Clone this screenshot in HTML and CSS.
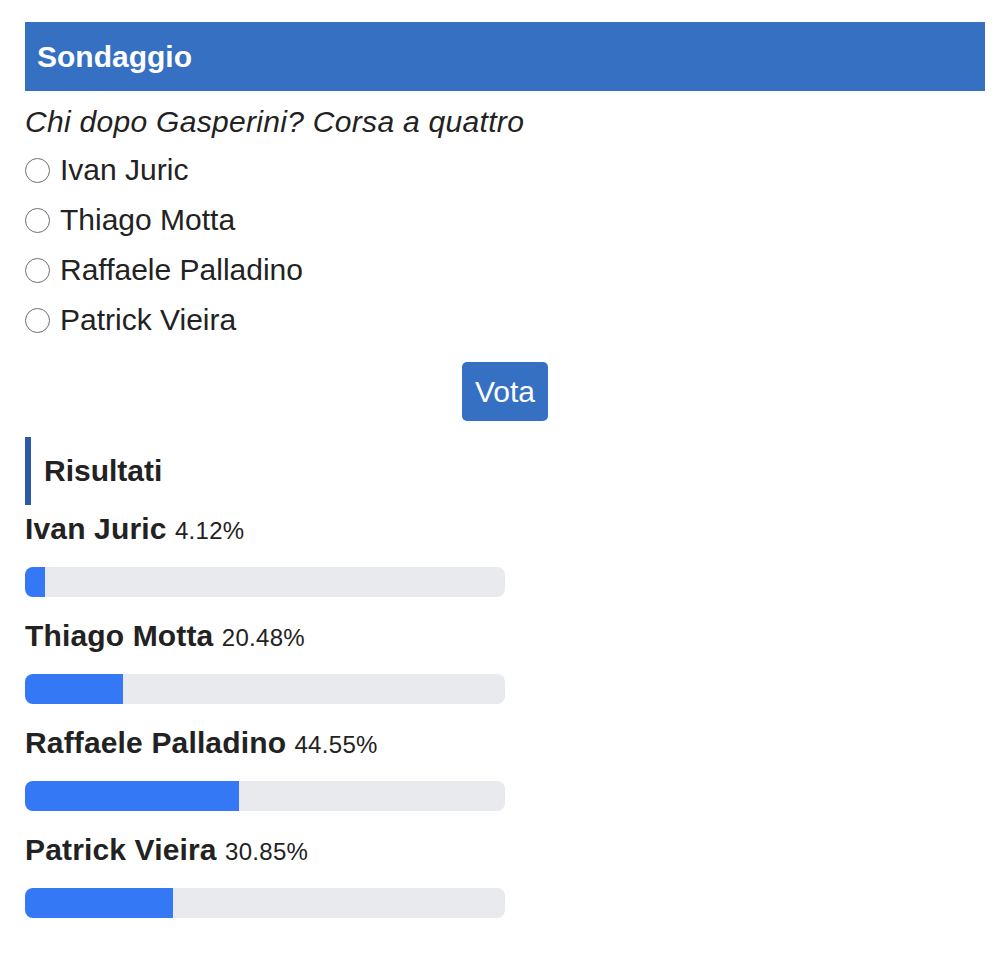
FILE: index.html
```html
<!DOCTYPE html>
<html lang="it">
<head>
<meta charset="utf-8">
<title>Sondaggio</title>
<link rel="stylesheet" href="styles.css">
</head>
<body>
<div class="poll">
  <div class="poll-header">Sondaggio</div>
  <div class="poll-question">Chi dopo Gasperini? Corsa a quattro</div>
  <form class="poll-options">
    <label class="option"><input type="radio" name="vote" class="radio"><span>Ivan Juric</span></label>
    <label class="option"><input type="radio" name="vote" class="radio"><span>Thiago Motta</span></label>
    <label class="option"><input type="radio" name="vote" class="radio"><span>Raffaele Palladino</span></label>
    <label class="option"><input type="radio" name="vote" class="radio"><span>Patrick Vieira</span></label>
    <div class="actions"><button type="button" class="vote-btn">Vota</button></div>
  </form>
  <div class="results-title">Risultati</div>
  <div class="results">
    <div class="result">
      <div class="result-label"><strong>Ivan Juric</strong> <span class="pct">4.12%</span></div>
      <div class="track"><div class="fill" style="width:4.12%"></div></div>
    </div>
    <div class="result">
      <div class="result-label"><strong>Thiago Motta</strong> <span class="pct">20.48%</span></div>
      <div class="track"><div class="fill" style="width:20.48%"></div></div>
    </div>
    <div class="result">
      <div class="result-label"><strong>Raffaele Palladino</strong> <span class="pct">44.55%</span></div>
      <div class="track"><div class="fill" style="width:44.55%"></div></div>
    </div>
    <div class="result">
      <div class="result-label"><strong>Patrick Vieira</strong> <span class="pct">30.85%</span></div>
      <div class="track"><div class="fill" style="width:30.85%"></div></div>
    </div>
  </div>
</div>
</body>
</html>
```

FILE: styles.css
```css
html, body {
  margin: 0;
  padding: 0;
  background: #ffffff;
}

body {
  font-family: "Liberation Sans", Arial, Helvetica, sans-serif;
  color: #222222;
}

.poll {
  margin: 22px 15px 0 25px;
}

.poll-header {
  height: 69px;
  display: flex;
  align-items: center;
  padding-left: 12px;
  background: #3670c2;
  color: #ffffff;
  font-size: 30px;
  font-weight: bold;
}

.poll-question {
  margin-top: 11px;
  font-size: 30px;
  line-height: 40px;
  font-style: italic;
  letter-spacing: 0.3px;
}

.poll-options {
  margin: 3px 0 0 0;
  display: flex;
  flex-direction: column;
}

.option {
  height: 50px;
  display: flex;
  align-items: center;
  font-size: 30px;
  line-height: 34px;
}

.radio {
  appearance: none;
  -webkit-appearance: none;
  width: 25px;
  height: 25px;
  margin: 0 10px 0 0;
  border: 1.5px solid #707070;
  border-radius: 50%;
  background: #ffffff;
  box-sizing: border-box;
  flex: none;
}

.actions {
  display: flex;
  justify-content: center;
  margin-top: 17px;
}

.vote-btn {
  font-family: inherit;
  font-size: 30px;
  line-height: 35px;
  padding: 12px 13px;
  border: none;
  border-radius: 5px;
  background: #3670c2;
  color: #ffffff;
}

.results-title {
  margin-top: 16px;
  height: 68px;
  line-height: 68px;
  border-left: 6px solid #2c59a8;
  padding-left: 13px;
  font-size: 30px;
  font-weight: bold;
}

.results {
  width: 480px;
  padding-top: 7px;
}

.result + .result {
  margin-top: 22px;
}

.result-label {
  height: 34px;
  font-size: 30px;
  line-height: 34px;
}

.result-label strong {
  letter-spacing: 0.15px;
}

.pct {
  font-size: 24px;
  line-height: 1;
  letter-spacing: 0.3px;
}

.track {
  margin-top: 21px;
  height: 30px;
  border-radius: 8px;
  background: #e9eaee;
  overflow: hidden;
}

.fill {
  height: 100%;
  background: #3478f6;
}
```
